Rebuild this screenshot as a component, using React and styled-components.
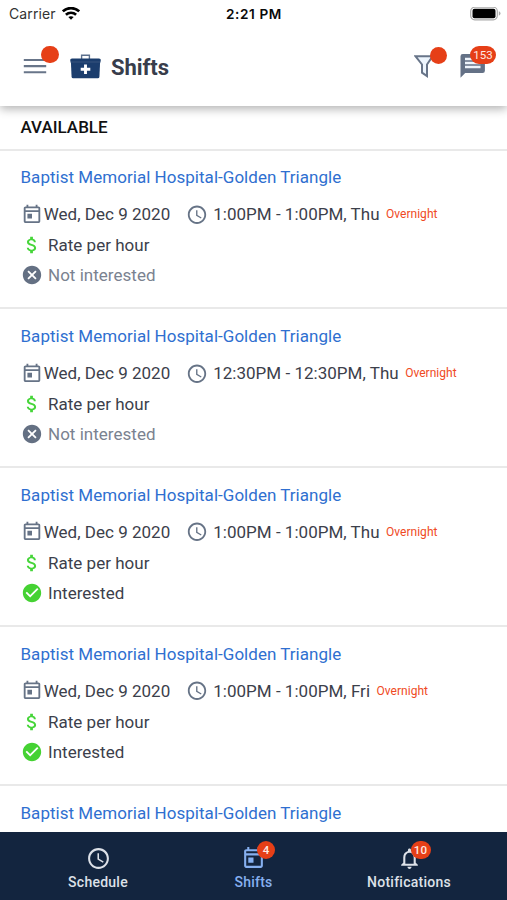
import React from "react";
import styled, { createGlobalStyle } from "styled-components";

const GlobalStyle = createGlobalStyle`
  * { box-sizing: border-box; }
  html, body { margin: 0; padding: 0; overflow: hidden; }
  body { font-family: Roboto, "Liberation Sans", sans-serif; background: #fff; color: #3a3f4b; }
`;

const Screen = styled.div`
  width: 507px;
  height: 900px;
  display: flex;
  flex-direction: column;
  overflow: hidden;
  background: #fff;
`;

const TopArea = styled.header`
  position: relative;
  z-index: 1;
  flex: none;
  height: 106px;
  background: #fff;
  box-shadow: 0 3px 9px 0 rgba(0, 0, 0, 0.3);
  clip-path: inset(0 0 -20px 0);
`;

const StatusBar = styled.div`
  display: grid;
  grid-template-columns: 1fr auto 1fr;
  align-items: center;
  height: 27px;
  padding: 0 6px 0 9px;
  font-family: Inter, sans-serif;
  color: #0a0a0a;
`;

const Carrier = styled.div`
  display: flex;
  align-items: center;
  gap: 6px;
  font-size: 14px;
  color: #333;
`;

const CarrierName = styled.span`
  width: 47px;
  letter-spacing: 0.1px;
`;

const Clock = styled.div`
  font-size: 13.6px;
  font-weight: 600;
  letter-spacing: 0.6px;
  margin-right: 2px;
`;

const BatteryWrap = styled.div`
  display: flex;
  justify-content: flex-end;
`;

const Toolbar = styled.div`
  display: flex;
  align-items: center;
  height: 79px;
  padding: 0 20px 0 23px;
`;

const Title = styled.h1`
  flex: 1;
  margin: 2px 0 0 10px;
  font-size: 22px;
  line-height: 26px;
  font-weight: 700;
  letter-spacing: -0.05px;
  color: #383d4b;
`;

const IconSlot = styled.div`
  position: relative;
  display: flex;
  width: ${(p) => p.$w}px;
  margin-right: ${(p) => p.$gap || 0}px;
`;

const Badge = styled.span`
  position: absolute;
  left: ${(p) => p.$x}px;
  top: ${(p) => p.$y}px;
  width: ${(p) => p.$w || 17.5}px;
  height: 17.5px;
  border-radius: 9px;
  background: #e63f17;
  color: #ffe9e2;
  font-size: 11.5px;
  line-height: 18px;
  text-align: center;
`;

const List = styled.main`
  flex: 1;
  min-height: 0;
  overflow: hidden;
`;

const SectionHeading = styled.h2`
  margin: 0;
  height: 42.5px;
  padding: 10px 20.5px 0;
  font-size: 17px;
  line-height: 22px;
  font-weight: 500;
  letter-spacing: 0;
  color: #111;
`;

const Card = styled.article`
  height: 158.95px;
  border-top: 2px solid #e9e9e9;
  padding: 14.6px 20.5px 0;
`;

const Hospital = styled.h3`
  margin: 0 0 10px;
  font-size: 17px;
  line-height: 24px;
  font-weight: 400;
  letter-spacing: 0.03px;
  color: #2f6fd0;
`;

const Line = styled.div`
  display: flex;
  align-items: center;
  height: 30.5px;
  font-size: 17px;
  letter-spacing: 0.02px;
  white-space: nowrap;
  color: ${(p) => (p.$muted ? "#7a8290" : "#3c404b")};
`;

const LineIcon = styled.span`
  display: flex;
  justify-content: center;
  width: 22px;
  margin-right: ${(p) => p.$gap}px;
`;

const DateText = styled.span`
  width: 142px;
`;

const Overnight = styled.span`
  margin-left: 6.5px;
  font-size: 12px;
  color: #ef4a24;
`;

const TabBar = styled.nav`
  flex: none;
  display: grid;
  grid-template-columns: 196px 115px 196px;
  justify-items: center;
  height: 68px;
  padding-top: 14px;
  background: #13253f;
`;

const Tab = styled.div`
  display: flex;
  flex-direction: column;
  align-items: center;
  gap: 1px;
  font-size: 14px;
  line-height: 20px;
  font-weight: 500;
  letter-spacing: 0.25px;
  color: ${(p) => (p.$active ? "#86b0f0" : "#dde1e8")};
`;

const Glyph = ({ d, size = 24, color = "currentColor" }) => (
  <svg width={size} height={size} viewBox="0 0 24 24" fill={color}>
    <path d={d} />
  </svg>
);

const CALENDAR =
  "M19 3h-1V1h-2v2H8V1H6v2H5c-1.1 0-2 .9-2 2v14c0 1.1.9 2 2 2h14c1.1 0 2-.9 2-2V5c0-1.1-.9-2-2-2zm0 16H5V9h14v10zm0-12H5V5h14v2zM7 11h5v5H7z";
const CLOCK =
  "M11.99 2C6.47 2 2 6.48 2 12s4.47 10 9.99 10C17.52 22 22 17.52 22 12S17.52 2 11.99 2zM12 20c-4.42 0-8-3.58-8-8s3.58-8 8-8 8 3.58 8 8-3.58 8-8 8zm.5-13H11v6l5.25 3.15.75-1.23-4.5-2.67z";
const DOLLAR =
  "M11.8 10.9c-2.27-.59-3-1.2-3-2.15 0-1.09 1.01-1.85 2.7-1.85 1.78 0 2.44.85 2.5 2.1h2.21c-.07-1.72-1.12-3.3-3.21-3.81V3h-3v2.16c-1.94.42-3.5 1.68-3.5 3.61 0 2.31 1.91 3.46 4.7 4.13 2.5.6 3 1.48 3 2.41 0 .69-.49 1.79-2.7 1.79-2.06 0-2.87-.92-2.98-2.1h-2.2c.12 2.19 1.76 3.42 3.68 3.83V21h3v-2.15c1.95-.37 3.5-1.5 3.5-3.55 0-2.84-2.43-3.81-4.7-4.4z";
const CANCEL =
  "M12 2C6.47 2 2 6.47 2 12s4.47 10 10 10 10-4.47 10-10S17.53 2 12 2zm5 13.59L15.59 17 12 13.41 8.41 17 7 15.59 10.59 12 7 8.41 8.41 7 12 10.59 15.59 7 17 8.41 13.41 12 17 15.59z";
const CHECK =
  "M12 2C6.48 2 2 6.48 2 12s4.48 10 10 10 10-4.48 10-10S17.52 2 12 2zm-2 15l-5-5 1.41-1.41L10 14.17l7.59-7.59L19 8l-9 9z";
const BELL =
  "M12 22c1.1 0 2-.9 2-2h-4c0 1.1.9 2 2 2zm6-6v-5c0-3.07-1.63-5.64-4.5-6.32V4c0-.83-.67-1.5-1.5-1.5s-1.5.67-1.5 1.5v.68C7.64 5.36 6 7.92 6 11v5l-2 2v1h16v-1l-2-2zm-2 1H8v-6c0-2.48 1.51-4.5 4-4.5s4 2.02 4 4.5v6z";

const SHIFTS = [
  { time: "1:00PM - 1:00PM, Thu", interested: false },
  { time: "12:30PM - 12:30PM, Thu", interested: false },
  { time: "1:00PM - 1:00PM, Thu", interested: true },
  { time: "1:00PM - 1:00PM, Fri", interested: true },
  {},
];

const ShiftDetails = ({ time, interested }) => (
  <>
    <Line>
      <LineIcon $gap={1.2}><Glyph d={CALENDAR} size={23.5} color="#667386" /></LineIcon>
      <DateText>Wed, Dec 9 2020</DateText>
      <LineIcon $gap={5.5}><Glyph d={CLOCK} size={23.5} color="#667386" /></LineIcon>
      <span>{time}</span>
      <Overnight>Overnight</Overnight>
    </Line>
    <Line>
      <LineIcon $gap={5.5}><Glyph d={DOLLAR} size={24} color="#46d539" /></LineIcon>
      <span>Rate per hour</span>
    </Line>
    <Line $muted={!interested}>
      <LineIcon $gap={5.5}>
        <Glyph d={interested ? CHECK : CANCEL} size={24} color={interested ? "#45d233" : "#647083"} />
      </LineIcon>
      <span>{interested ? "Interested" : "Not interested"}</span>
    </Line>
  </>
);

const ShiftCard = ({ time, interested }) => (
  <Card>
    <Hospital>Baptist Memorial Hospital-Golden Triangle</Hospital>
    {time && <ShiftDetails time={time} interested={interested} />}
  </Card>
);

export default function App() {
  return (
    <>
      <GlobalStyle />
      <Screen>
        <TopArea>
          <StatusBar>
            <Carrier>
              <CarrierName>Carrier</CarrierName>
              <svg width="18" height="14" viewBox="0 0 18 14" fill="none" stroke="#000" strokeWidth="2.6">
                <path d="M.8 4.3C5.4 0 12.6 0 17.2 4.3" />
                <path d="M3.9 7.8c2.9-2.7 7.3-2.7 10.2 0" />
                <path d="M9 12.8 6.3 10.1c1.6-1.3 3.8-1.3 5.4 0z" fill="#000" stroke="none" />
              </svg>
            </Carrier>
            <Clock>2:21 PM</Clock>
            <BatteryWrap>
              <svg width="31" height="14" viewBox="0 0 31 14">
                <rect x="0.7" y="0.2" width="26.6" height="12.6" rx="4" fill="#fff" stroke="#aaa" strokeWidth="1.2" />
                <rect x="2.5" y="1.8" width="23" height="9.4" rx="2" fill="#000" />
                <path d="M28.8 4.3q1.7.6 1.7 2.2t-1.7 2.2z" fill="#aaa" />
              </svg>
            </BatteryWrap>
          </StatusBar>
          <Toolbar>
            <IconSlot $w={24} $gap={23}>
              <svg width="24" height="18" viewBox="0 0 24 18" stroke="#687589" strokeWidth="2.1">
                <path d="M.8 2h22.4M.8 8.1h22.4M.8 14.2h22.4" />
              </svg>
              <Badge $x={18.2} $y={-12} />
            </IconSlot>
            <svg width="31" height="26" viewBox="0 0 31 26">
              <path d="M11.6 5V1.3h7.8V5" fill="none" stroke="#5c708d" strokeWidth="1.4" />
              <path d="M2 4.5h27q1.8 0 1.8 1.5L30.4 8.5H.6L.2 6Q.2 4.5 2 4.5z" fill="#1b3d6d" />
              <path d="M.9 8h29.2l-.7 15q-.1 1.2-1.6 1.2H3.2q-1.5 0-1.6-1.2z" fill="#1b3d6d" />
              <path d="M1 8h29" stroke="#4d678c" strokeWidth=".6" />
              <path d="M15.5 10.5v9.6M10.7 15.3h9.6" stroke="#fff" strokeWidth="2.9" />
            </svg>
            <Title>Shifts</Title>
            <IconSlot $w={20} $gap={26.5}>
              <svg width="20" height="24" viewBox="0 0 20 24" fill="#edf5fd" stroke="#687589" strokeWidth="2">
                <path d="M1.4 1.2h17.2L13 9.5v11.6L8 17.7V9.5z" />
              </svg>
              <Badge $x={16} $y={-8} />
            </IconSlot>
            <IconSlot $w={27}>
              <svg width="27" height="26" viewBox="0 0 27 26">
                <path d="M2.8 0h19.8q2.3 0 2.3 2.3v14.5q0 2.3-2.3 2.3H5.2L.5 23.7V2.3Q.5 0 2.8 0z" fill="#647186" />
                <path d="M5 5h15.5M5 9h15.5M5 13h15.5" stroke="#eef4fb" strokeWidth="2.6" />
              </svg>
              <Badge $x={10} $y={-7.5} $w={26}>153</Badge>
            </IconSlot>
          </Toolbar>
        </TopArea>
        <List>
          <SectionHeading>AVAILABLE</SectionHeading>
          {SHIFTS.map((s, i) => (
            <ShiftCard key={i} {...s} />
          ))}
        </List>
        <TabBar>
          <Tab>
            <IconSlot $w={25}><Glyph d={CLOCK} size={25} /></IconSlot>
            <span>Schedule</span>
          </Tab>
          <Tab $active>
            <IconSlot $w={25}>
              <Glyph d={CALENDAR} size={25} />
              <Badge $x={16.5} $y={-5}>4</Badge>
            </IconSlot>
            <span>Shifts</span>
          </Tab>
          <Tab>
            <IconSlot $w={25}>
              <Glyph d={BELL} size={25} />
              <Badge $x={14} $y={-5} $w={20}>10</Badge>
            </IconSlot>
            <span>Notifications</span>
          </Tab>
        </TabBar>
      </Screen>
    </>
  );
}
